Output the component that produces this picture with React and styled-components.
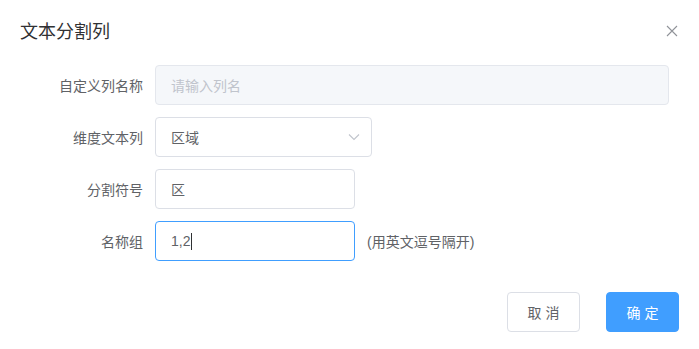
import React from "react";
import styled, { createGlobalStyle } from "styled-components";

const GlobalStyle = createGlobalStyle`
  html, body {
    margin: 0;
    padding: 0;
    background: #fff;
  }
  body {
    font-family: "Liberation Sans", "Noto Sans CJK SC", sans-serif;
    -webkit-font-smoothing: antialiased;
  }
`;

const Dialog = styled("div")`
  width: 699px;
  height: 349px;
  box-sizing: border-box;
  background: #fff;
  display: flex;
  flex-direction: column;
`;

const Header = styled("div")`
  position: relative;
  padding: 20px 20px 10px;
`;

const Title = styled("span")`
  font-size: 18px;
  line-height: 24px;
  color: #303133;
`;

const Close = styled("button")`
  position: absolute;
  top: 24px;
  right: 20px;
  width: 14px;
  height: 14px;
  padding: 0;
  border: none;
  background: transparent;
  display: flex;
  align-items: center;
  justify-content: center;
`;

const Body = styled("div")`
  padding: 11px 20px 0;
  display: flex;
  flex-direction: column;
  gap: 12px;
`;

const Row = styled("div")`
  display: flex;
  align-items: center;
  height: 40px;
`;

const Label = styled("label")`
  width: 135px;
  box-sizing: border-box;
  padding-right: 12px;
  text-align: right;
  font-size: 14px;
  color: #606266;
  flex-shrink: 0;
`;

const Field = styled("div")`
  position: relative;
  box-sizing: border-box;
  width: ${props => props.width}px;
  height: 40px;
  padding: 0 15px;
  display: flex;
  align-items: center;
  border: 1px solid ${props => (props.focused ? "#409eff" : props.disabled ? "#e4e7ed" : "#dcdfe6")};
  border-radius: 4px;
  background: ${props => (props.disabled ? "#f5f7fa" : "#fff")};
  font-size: 14px;
  color: ${props => (props.placeholder ? "#c0c4cc" : "#606266")};
`;

const Caret = styled("span")`
  display: inline-block;
  width: 1px;
  height: 17px;
  background: #303133;
  margin-left: 1px;
`;

const Arrow = styled("span")`
  position: absolute;
  right: 11px;
  top: 0;
  bottom: 0;
  display: flex;
  align-items: center;
`;

const Hint = styled("span")`
  margin-left: 12px;
  font-size: 14px;
  color: #606266;
`;

const Footer = styled("div")`
  display: flex;
  justify-content: flex-end;
  gap: 26px;
  padding: 31px 20px 0;
`;

const Button = styled("button")`
  box-sizing: border-box;
  width: 73px;
  height: 40px;
  border-radius: 4px;
  font-family: inherit;
  font-size: 14px;
  letter-spacing: 4px;
  text-indent: 4px;
  cursor: pointer;
  border: 1px solid ${props => (props.primary ? "#409eff" : "#dcdfe6")};
  background: ${props => (props.primary ? "#409eff" : "#fff")};
  color: ${props => (props.primary ? "#fff" : "#606266")};
`;

const App = () => (
  <>
    <GlobalStyle />
    <Dialog>
      <Header>
        <Title>文本分割列</Title>
        <Close aria-label="关闭">
          <svg width="12" height="12" viewBox="0 0 12 12">
            <path d="M1 1L11 11M11 1L1 11" stroke="#909399" strokeWidth="1.1" fill="none" />
          </svg>
        </Close>
      </Header>
      <Body>
        <Row>
          <Label>自定义列名称</Label>
          <Field width={514} disabled placeholder>
            请输入列名
          </Field>
        </Row>
        <Row>
          <Label>维度文本列</Label>
          <Field width={217}>
            区域
            <Arrow>
              <svg width="12" height="8" viewBox="0 0 12 8">
                <path d="M1 1.5L6 6.5L11 1.5" stroke="#c0c4cc" strokeWidth="1.1" fill="none" />
              </svg>
            </Arrow>
          </Field>
        </Row>
        <Row>
          <Label>分割符号</Label>
          <Field width={200}>区</Field>
        </Row>
        <Row>
          <Label>名称组</Label>
          <Field width={200} focused>
            1,2
            <Caret />
          </Field>
          <Hint>(用英文逗号隔开)</Hint>
        </Row>
      </Body>
      <Footer>
        <Button>取消</Button>
        <Button primary>确定</Button>
      </Footer>
    </Dialog>
  </>
);

export default App;
